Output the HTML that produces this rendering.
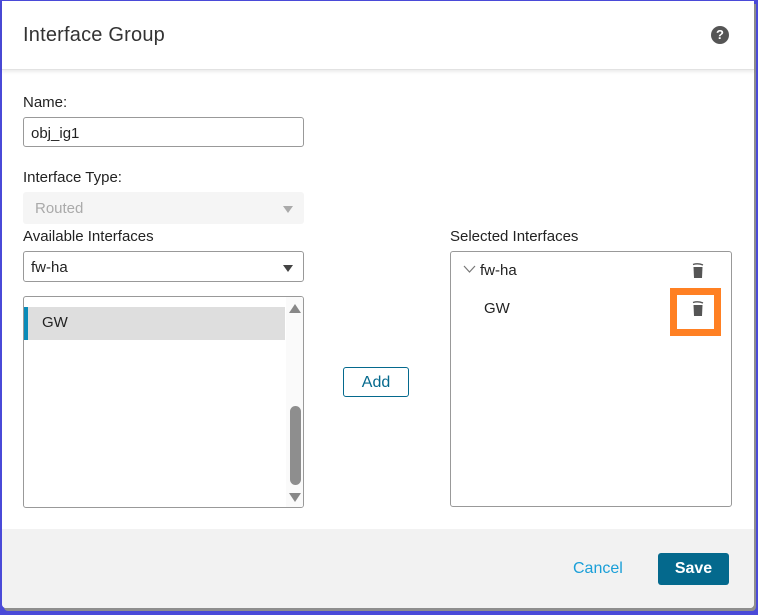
<!DOCTYPE html>
<html><head><style>
*{box-sizing:border-box;margin:0;padding:0}
body{width:758px;height:615px;background:#4a4ad8;position:relative;overflow:hidden;font-family:"Liberation Sans",sans-serif;color:#222}
.dlg{position:absolute;left:2px;top:1px;width:752px;height:607px;background:#fff;border-radius:0 0 4px 4px;box-shadow:2px 3px 0 #8e8e8e}
.hdr{position:absolute;left:0;top:0;width:752px;height:69px;border-bottom:1px solid #e2e2e2;box-shadow:0 2px 3px rgba(0,0,0,.08)}
.t{position:absolute;font-size:15px}
.inp{position:absolute;border:1px solid #999;border-radius:3px;background:#fff;font-size:15px;padding-left:7px;line-height:31px}
.arr{position:absolute;width:0;height:0;border-left:5px solid transparent;border-right:5px solid transparent;border-top:7px solid #444}
.foot{position:absolute;left:0;top:528px;width:752px;height:79px;background:#f2f2f2;border-radius:0 0 4px 4px}
</style></head><body>
<div class="dlg">
<div class="hdr">
<div class="t" style="left:21px;top:23px;font-size:20px;color:#333;letter-spacing:0.2px">Interface Group</div>
<div style="position:absolute;left:709px;top:25px;width:18px;height:18px;border-radius:50%;background:#555;color:#fff;font-size:13px;font-weight:bold;text-align:center;line-height:18px">?</div>
</div>
<div class="t" style="left:21px;top:93px">Name:</div>
<div class="inp" style="left:21px;top:116px;width:281px;height:30px">obj_ig1</div>
<div class="t" style="left:21px;top:168px">Interface Type:</div>
<div class="inp" style="left:21px;top:191px;width:281px;height:32px;border:none;background:#f5f5f5;color:#aaa;padding-left:12px;line-height:33px">Routed</div>
<div class="arr" style="left:281px;top:205px;border-top-color:#aaa"></div>
<div class="t" style="left:21px;top:227px">Available Interfaces</div>
<div class="inp" style="left:21px;top:250px;width:281px;height:31px">fw-ha</div>
<div class="arr" style="left:281px;top:264px"></div>
<div style="position:absolute;left:21px;top:295px;width:281px;height:212px;border:1px solid #999;border-radius:3px;overflow:hidden">
<div style="position:absolute;left:0;top:10px;width:261px;height:33px;background:#dedede;border-left:4px solid #0a8bb8;font-size:15px;padding-left:14px;line-height:32px">GW</div>
<div style="position:absolute;left:262px;top:0;width:18px;height:210px;background:#fafafa"></div>
<div style="position:absolute;left:265px;top:7px;width:0;height:0;border-left:6px solid transparent;border-right:6px solid transparent;border-bottom:9px solid #888"></div>
<div style="position:absolute;left:265px;top:196px;width:0;height:0;border-left:6px solid transparent;border-right:6px solid transparent;border-top:9px solid #888"></div>
<div style="position:absolute;left:266px;top:109px;width:11px;height:79px;border-radius:6px;background:#8e8e8e"></div>
</div>
<div style="position:absolute;left:341px;top:366px;width:66px;height:30px;border:1px solid #04698d;border-radius:3px;color:#04698d;font-size:16px;text-align:center;line-height:29px">Add</div>
<div class="t" style="left:448px;top:227px">Selected Interfaces</div>
<div style="position:absolute;left:448px;top:250px;width:282px;height:256px;border:1px solid #999;border-radius:3px"></div>
<svg style="position:absolute;left:461px;top:263px" width="16" height="10"><path d="M1 2 L6.5 8 L12 2" fill="none" stroke="#777" stroke-width="1.2"/></svg>
<div class="t" style="left:478px;top:261px">fw-ha</div>
<div class="t" style="left:482px;top:299px">GW</div>
<svg style="position:absolute;left:690px;top:262px" width="13" height="16"><path d="M1 1.5 Q6 0 11 2" stroke="#555" stroke-width="1.4" fill="none"/><path d="M1.5 4 H10.5 L10 15 H2 Z" fill="#555"/></svg>
<div style="position:absolute;left:668px;top:287px;width:51px;height:48px;border:7px solid #ff8023"></div>
<svg style="position:absolute;left:690px;top:300px" width="13" height="16"><path d="M1 1.5 Q6 0 11 2" stroke="#555" stroke-width="1.4" fill="none"/><path d="M1.5 4 H10.5 L10 15 H2 Z" fill="#555"/></svg>
<div class="foot">
<div class="t" style="left:571px;top:31px;color:#1a9fd8;font-size:16px">Cancel</div>
<div style="position:absolute;left:656px;top:24px;width:71px;height:32px;background:#04698d;border-radius:3px;color:#fff;font-weight:bold;font-size:16px;text-align:center;line-height:32px">Save</div>
</div>
</div>
</body></html>
